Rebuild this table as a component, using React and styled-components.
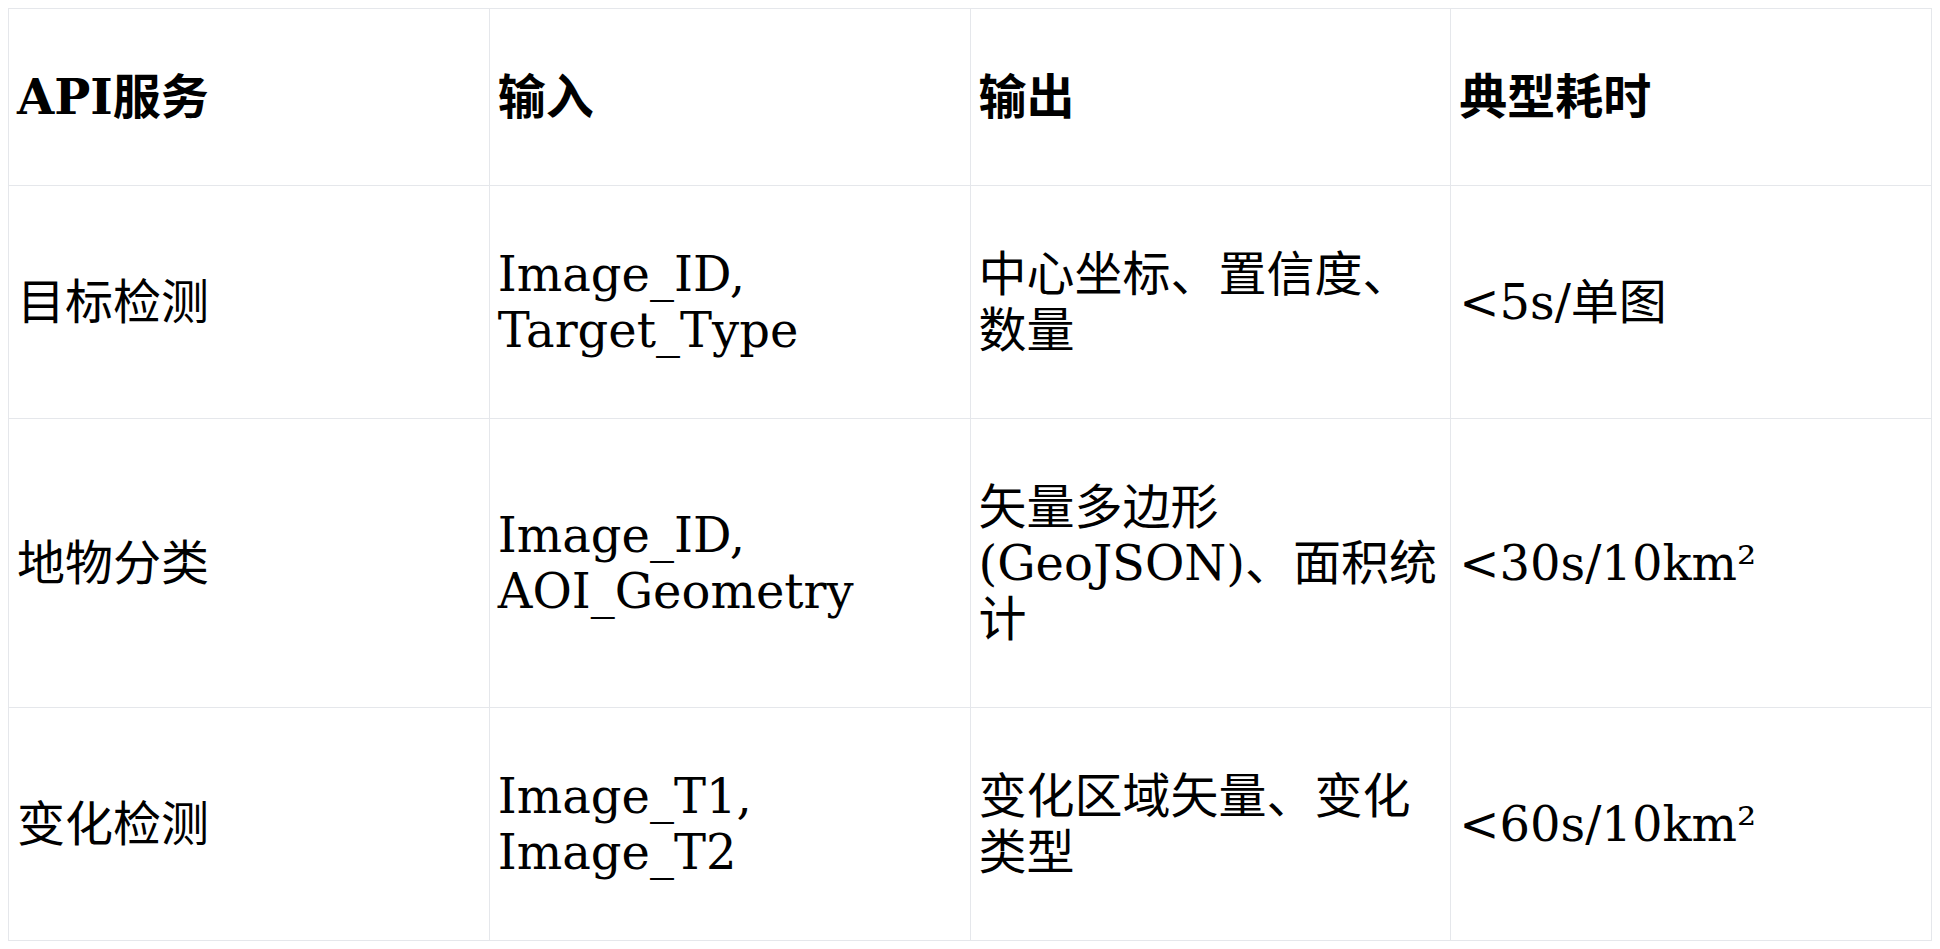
import React from "react";
import styled, { createGlobalStyle } from "styled-components";

const Global = createGlobalStyle`
  html, body { background: #ffffff; }
  body {
    margin: 8px;
    font-family: "DejaVu Serif", "Noto Sans CJK SC", serif;
    color: #000000;
  }
`;

const Table = styled.table`
  width: 100%;
  table-layout: fixed;
  border-collapse: collapse;
  font-family: "DejaVu Serif", "Noto Sans CJK SC", serif;
  font-size: 48px;
  line-height: 56px;
`;

const HeadCell = styled.th`
  border: 1px solid #e5e7eb;
  padding: 60px 8px;
  text-align: left;
  vertical-align: middle;
  font-weight: 700;
`;

const Cell = styled.td`
  border: 1px solid #e5e7eb;
  padding: 60px 8px;
  text-align: left;
  vertical-align: middle;
  font-weight: 400;
`;

const headers = ["API服务", "输入", "输出", "典型耗时"];

const rows = [
  ["目标检测", ["Image_ID,", "Target_Type"], "中心坐标、置信度、数量", "<5s/单图"],
  ["地物分类", ["Image_ID,", "AOI_Geometry"], "矢量多边形(GeoJSON)、面积统计", "<30s/10km²"],
  ["变化检测", ["Image_T1,", "Image_T2"], "变化区域矢量、变化类型", "<60s/10km²"],
];

export default function App() {
  return (
    <>
      <Global />
      <Table>
        <thead>
          <tr>
            {headers.map((h) => (
              <HeadCell key={h}>{h}</HeadCell>
            ))}
          </tr>
        </thead>
        <tbody>
          {rows.map((r) => (
            <tr key={r[0]}>
              <Cell>{r[0]}</Cell>
              <Cell>{r[1].join(" ")}</Cell>
              <Cell>{r[2]}</Cell>
              <Cell>{r[3]}</Cell>
            </tr>
          ))}
        </tbody>
      </Table>
    </>
  );
}
